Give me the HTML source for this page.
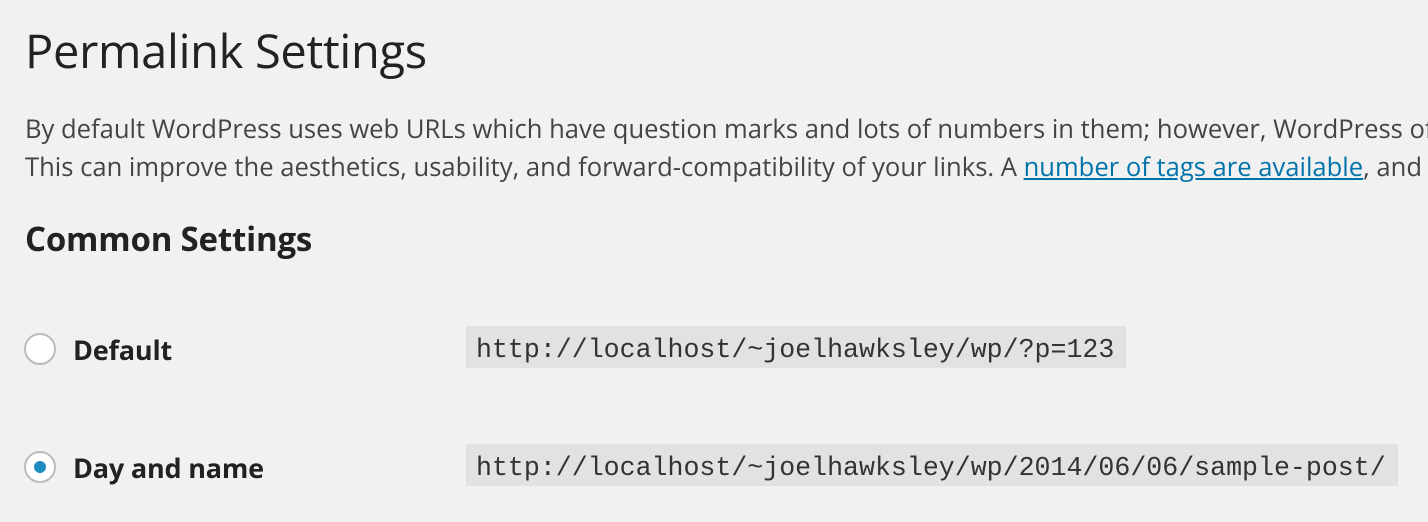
<!DOCTYPE html>
<html><head><meta charset="utf-8"><style>
html,body{margin:0;width:1428px;height:522px;overflow:hidden;}
body{background:#f1f1f1;position:relative;font-family:"Open Sans","Liberation Sans",sans-serif;color:#222;}
.clip{position:absolute;left:0;top:0;width:1428px;height:522px;overflow:hidden;}
.a{position:absolute;white-space:nowrap;}
h1{font-weight:normal;font-size:47px;left:25px;top:18px;margin:0;letter-spacing:-0.3px;}
.p{font-size:25.6px;left:25px;color:#444;max-width:1403px;overflow:hidden;}
.p a{color:#0073aa;text-decoration:underline;}
h2{font-size:33px;margin:0;left:25px;top:216px;font-weight:bold;letter-spacing:-0.2px;}
.lab{font-size:27px;font-weight:bold;left:73px;color:#222;letter-spacing:-0.2px;}
.r{position:absolute;left:24px;width:28px;height:28px;border:2px solid #bbb;border-radius:50%;background:#fff;box-sizing:content-box;}
.r.on::after{content:"";position:absolute;left:8px;top:8px;width:12px;height:12px;border-radius:50%;background:#1e8cbe;}
code{position:absolute;left:466px;height:42px;background:#e2e2e2;font-family:"Liberation Mono",monospace;font-size:26.6px;line-height:42px;padding:3px 10px 0;color:#333;box-sizing:border-box;}
</style></head><body><div class="clip">
<h1 class="a">Permalink Settings</h1>
<div class="a p" style="top:111px">By default WordPress uses web URLs which have question marks and lots of numbers in them; however, WordPress offers you the ability</div>
<div class="a p" style="top:149px">This can improve the aesthetics, usability, and forward-compatibility of your links. A <a>number of tags are available</a>, and here are some</div>
<h2 class="a">Common Settings</h2>
<div class="r" style="top:333px"></div>
<div class="a lab" style="top:331px">Default</div>
<code style="top:326px;width:660px">http://localhost/~joelhawksley/wp/?p=123</code>
<div class="r on" style="top:451px"></div>
<div class="a lab" style="top:449px">Day and name</div>
<code style="top:444px;width:932px">http://localhost/~joelhawksley/wp/2014/06/06/sample-post/</code>
</div></body></html>
